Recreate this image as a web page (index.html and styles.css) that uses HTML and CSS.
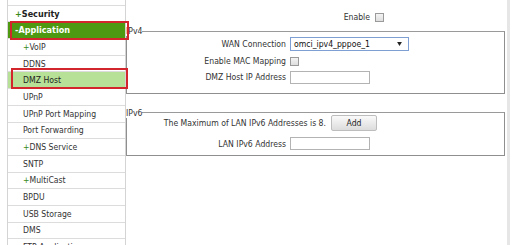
FILE: index.html
```html
<!DOCTYPE html>
<html>
<head>
<meta charset="utf-8">
<link rel="stylesheet" href="styles.css">
</head>
<body>
<div class="page">
  <ul class="nav">
    <li class="item"></li>
    <li class="item top"><span class="plus">+</span>Security</li>
    <li class="item top active"><span class="sign">-</span>Application</li>
    <li class="item sub"><span class="plus">+</span>VoIP</li>
    <li class="item sub">DDNS</li>
    <li class="item sub current">DMZ Host</li>
    <li class="item sub">UPnP</li>
    <li class="item sub">UPnP Port Mapping</li>
    <li class="item sub">Port Forwarding</li>
    <li class="item sub"><span class="plus">+</span>DNS Service</li>
    <li class="item sub">SNTP</li>
    <li class="item sub"><span class="plus">+</span>MultiCast</li>
    <li class="item sub">BPDU</li>
    <li class="item sub">USB Storage</li>
    <li class="item sub">DMS</li>
    <li class="item sub">FTP Application</li>
  </ul>
  <div class="main">
    <div class="enable-row">
      <span class="enable-label">Enable</span>
      <span class="check"></span>
    </div>
    <fieldset class="group v4">
      <legend>IPv4</legend>
      <div class="form">
        <label>WAN Connection</label>
        <div class="select"><span>omci_ipv4_pppoe_1</span><svg width="5" height="4" viewBox="0 0 6 5"><path d="M0 0H6L3 5Z" fill="#222"/></svg></div>
        <label>Enable MAC Mapping</label>
        <div><span class="check"></span></div>
        <label>DMZ Host IP Address</label>
        <div><span class="input"></span></div>
      </div>
    </fieldset>
    <fieldset class="group v6">
      <legend>IPv6</legend>
      <div class="max-row">
        <span class="max-text">The Maximum of LAN IPv6 Addresses is 8.</span>
        <span class="btn">Add</span>
      </div>
      <div class="form">
        <label>LAN IPv6 Address</label>
        <div><span class="input"></span></div>
      </div>
    </fieldset>
  </div>
</div>
</body>
</html>
```
FILE: styles.css
```css
html, body {
  margin: 0;
  padding: 0;
  background: #fff;
  overflow: hidden;
}
body {
  font-family: "DejaVu Sans Condensed", "DejaVu Sans", Tahoma, sans-serif;
  font-size: 8.6px;
  color: #333;
}
.page {
  display: flex;
  width: 507px;
  height: 245px;
  border-right: 3px solid #e6e6e6;
}
.nav {
  list-style: none;
  margin: -11px 0 0 7px;
  padding: 0;
  width: 117px;
  border-left: 1px solid #d4d4d4;
  border-right: 1px solid #d4d4d4;
  flex: none;
}
.item {
  height: 15.7px;
  border-bottom: 1px solid #dcdcdc;
  display: flex;
  align-items: center;
  padding-left: 15px;
  white-space: nowrap;
  position: relative;
}
.item.top {
  padding-left: 7px;
  font-weight: bold;
  font-size: 9px;
  color: #222;
}
.plus {
  color: #3a8a18;
}
.item.active {
  background: #4d9a12;
  color: #fff;
}
.item.active::after,
.item.current::after {
  content: "";
  position: absolute;
  border: 2.5px solid #d3262c;
}
.item.active::after {
  left: 2px;
  right: -4px;
  top: -1px;
  bottom: -2px;
}
.item.current {
  background: #b7e196;
  color: #222;
}
.item.current::after {
  left: 3px;
  right: -3px;
  top: -4px;
  bottom: -1px;
}
.main {
  flex: 1;
  padding-right: 2px;
}
.enable-row {
  display: flex;
  align-items: center;
  height: 16px;
  margin-top: 9px;
}
.enable-label {
  width: 244px;
  text-align: right;
  margin-right: 5px;
}
.check {
  display: inline-block;
  width: 7px;
  height: 7px;
  border: 1px solid #9a9a9a;
  background: linear-gradient(#f4f4f4, #dedede);
  vertical-align: middle;
}
.group {
  border: 1px solid #8f8f8f;
  border-top-color: #9a9a9a;
  margin: 0;
  padding: 0;
  min-width: 0;
}
.group legend {
  padding: 0;
  margin-left: -1px;
  font-size: 8.6px;
  line-height: 10px;
}
.v4 {
  margin-top: 1px;
  padding-bottom: 7px;
}
.v6 {
  margin-top: 14px;
  padding-bottom: 0;
}
.form {
  display: grid;
  grid-template-columns: 159px 1fr;
  column-gap: 4px;
  grid-auto-rows: 16.5px;
  align-items: center;
}
.form label {
  text-align: right;
}
.select {
  height: 12px;
  border: 1px solid #7d9fd4;
  display: flex;
  align-items: center;
  justify-content: space-between;
  padding: 0 6px 0 3px;
  box-sizing: content-box;
  width: 108px;
  color: #111;
}
.input {
  display: inline-block;
  width: 78px;
  height: 11px;
  border: 1px solid #b3b3b3;
  vertical-align: middle;
}
.max-row {
  display: flex;
  align-items: center;
  height: 16px;
  margin-top: -3px;
}
.max-text {
  width: 199px;
  text-align: right;
  margin-right: 5px;
}
.btn {
  width: 44px;
  height: 14px;
  border: 1px solid #bdbdbd;
  border-radius: 2px;
  background: linear-gradient(#fafafa, #dcdcdc);
  display: flex;
  align-items: center;
  justify-content: center;
  color: #222;
}
.v6 .form {
  grid-auto-rows: 22px;
  margin-top: 2px;
}
```
